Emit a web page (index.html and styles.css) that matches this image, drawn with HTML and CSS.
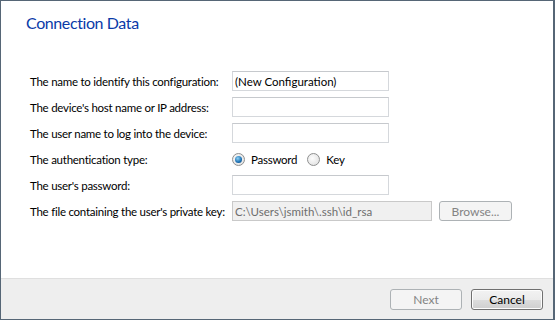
FILE: index.html
```html
<!DOCTYPE html>
<html lang="en">
<head>
  <meta charset="UTF-8">
  <title>Connection Data</title>
  <link rel="stylesheet" href="styles.css">
</head>
<body>

<div class="window">
  <div class="page">
    <h1 class="title">Connection Data</h1>

    <div class="form">
      <label>The name to identify this configuration:</label>
      <input type="text" class="field" value="(New Configuration)">

      <label>The device's host name or IP address:</label>
      <input type="text" class="field">

      <label>The user name to log into the device:</label>
      <input type="text" class="field">

      <label>The authentication type:</label>
      <div class="radios">
        <span class="radio checked"></span><span class="radio-text">Password</span>
        <span class="radio"></span><span class="radio-text">Key</span>
      </div>

      <label>The user's password:</label>
      <input type="password" class="field">

      <label>The file containing the user's private key:</label>
      <div class="keyrow">
        <input type="text" class="field wide" value="C:\Users\jsmith\.ssh\id_rsa" disabled>
        <button class="btn" disabled>Browse...</button>
      </div>
    </div>
  </div>

  <div class="footer">
    <button class="btn" disabled>Next</button>
    <button class="btn default">Cancel</button>
  </div>
</div>

</body>
</html>
```

FILE: styles.css
```css
body { margin: 0; background: #fff; font-family: Lato, "Noto Sans", sans-serif; font-size: 11.5px; letter-spacing: -0.25px; color: #000; }

.window {
  width: 555px;
  height: 320px;
  box-sizing: border-box;
  border: 1px solid #566676;
  border-right-width: 2px;
  display: flex;
  flex-direction: column;
  background: #fff;
}

.page { flex: 1; padding: 11px 0 0 25px; }

.title {
  margin: 0;
  font-size: 16px;
  letter-spacing: -0.4px;
  font-weight: normal;
  color: #0a3aa8;
  line-height: 22px;
}

.form {
  display: grid;
  grid-template-columns: 202px auto;
  grid-auto-rows: 26px;
  align-items: center;
  margin: 34px 0 0 4px;
}

.form label { white-space: nowrap; }

.field {
  width: 157px;
  height: 20px;
  box-sizing: border-box;
  border: 1px solid #d5d8dc;
  border-top-color: #c6c9cd;
  padding: 0 2px;
  font: inherit;
  outline: none;
}
.field.wide { width: 200px; }
.field:disabled { background: #f0f0f0; color: #6d6d6d; border-color: #c9c9c9; }

.radios { display: flex; align-items: center; }
.radio {
  width: 13px;
  height: 13px;
  box-sizing: border-box;
  border-radius: 50%;
  border: 1px solid #8e8f8f;
  background: radial-gradient(circle at 40% 40%, #fdfdfd, #dcdcdc);
  position: relative;
  margin-right: 6px;
}
.radio.checked::after {
  content: "";
  position: absolute;
  left: 2px; top: 2px;
  width: 7px; height: 7px;
  border-radius: 50%;
  background: radial-gradient(circle at 40% 35%, #8fd2f5, #1b6fb2 60%, #0d3e6e);
}
.radio-text { margin-right: 10px; }

.keyrow { display: flex; align-items: center; gap: 7px; }

.btn {
  height: 21px;
  width: 72px;
  box-sizing: border-box;
  font: inherit;
  font-size: 12px;
  letter-spacing: 0;
  border-radius: 3px;
  padding: 0;
  border: 1px solid #adb2b5;
  background: #f4f4f4;
  color: #838383;
}
.keyrow .btn { width: 73px; height: 20px; }
.btn.default {
  border-color: #707070;
  color: #000;
  background: linear-gradient(#f2f2f2 0%, #ebebeb 50%, #dddddd 51%, #cfcfcf 100%);
  box-shadow: inset 0 0 0 1px #fcfcfc;
}

.footer {
  height: 40px;
  border-top: 1px solid #dfdfdf;
  background: #eeeeee;
  display: flex;
  justify-content: flex-end;
  align-items: center;
  gap: 9px;
  padding-right: 10px;
}
```
